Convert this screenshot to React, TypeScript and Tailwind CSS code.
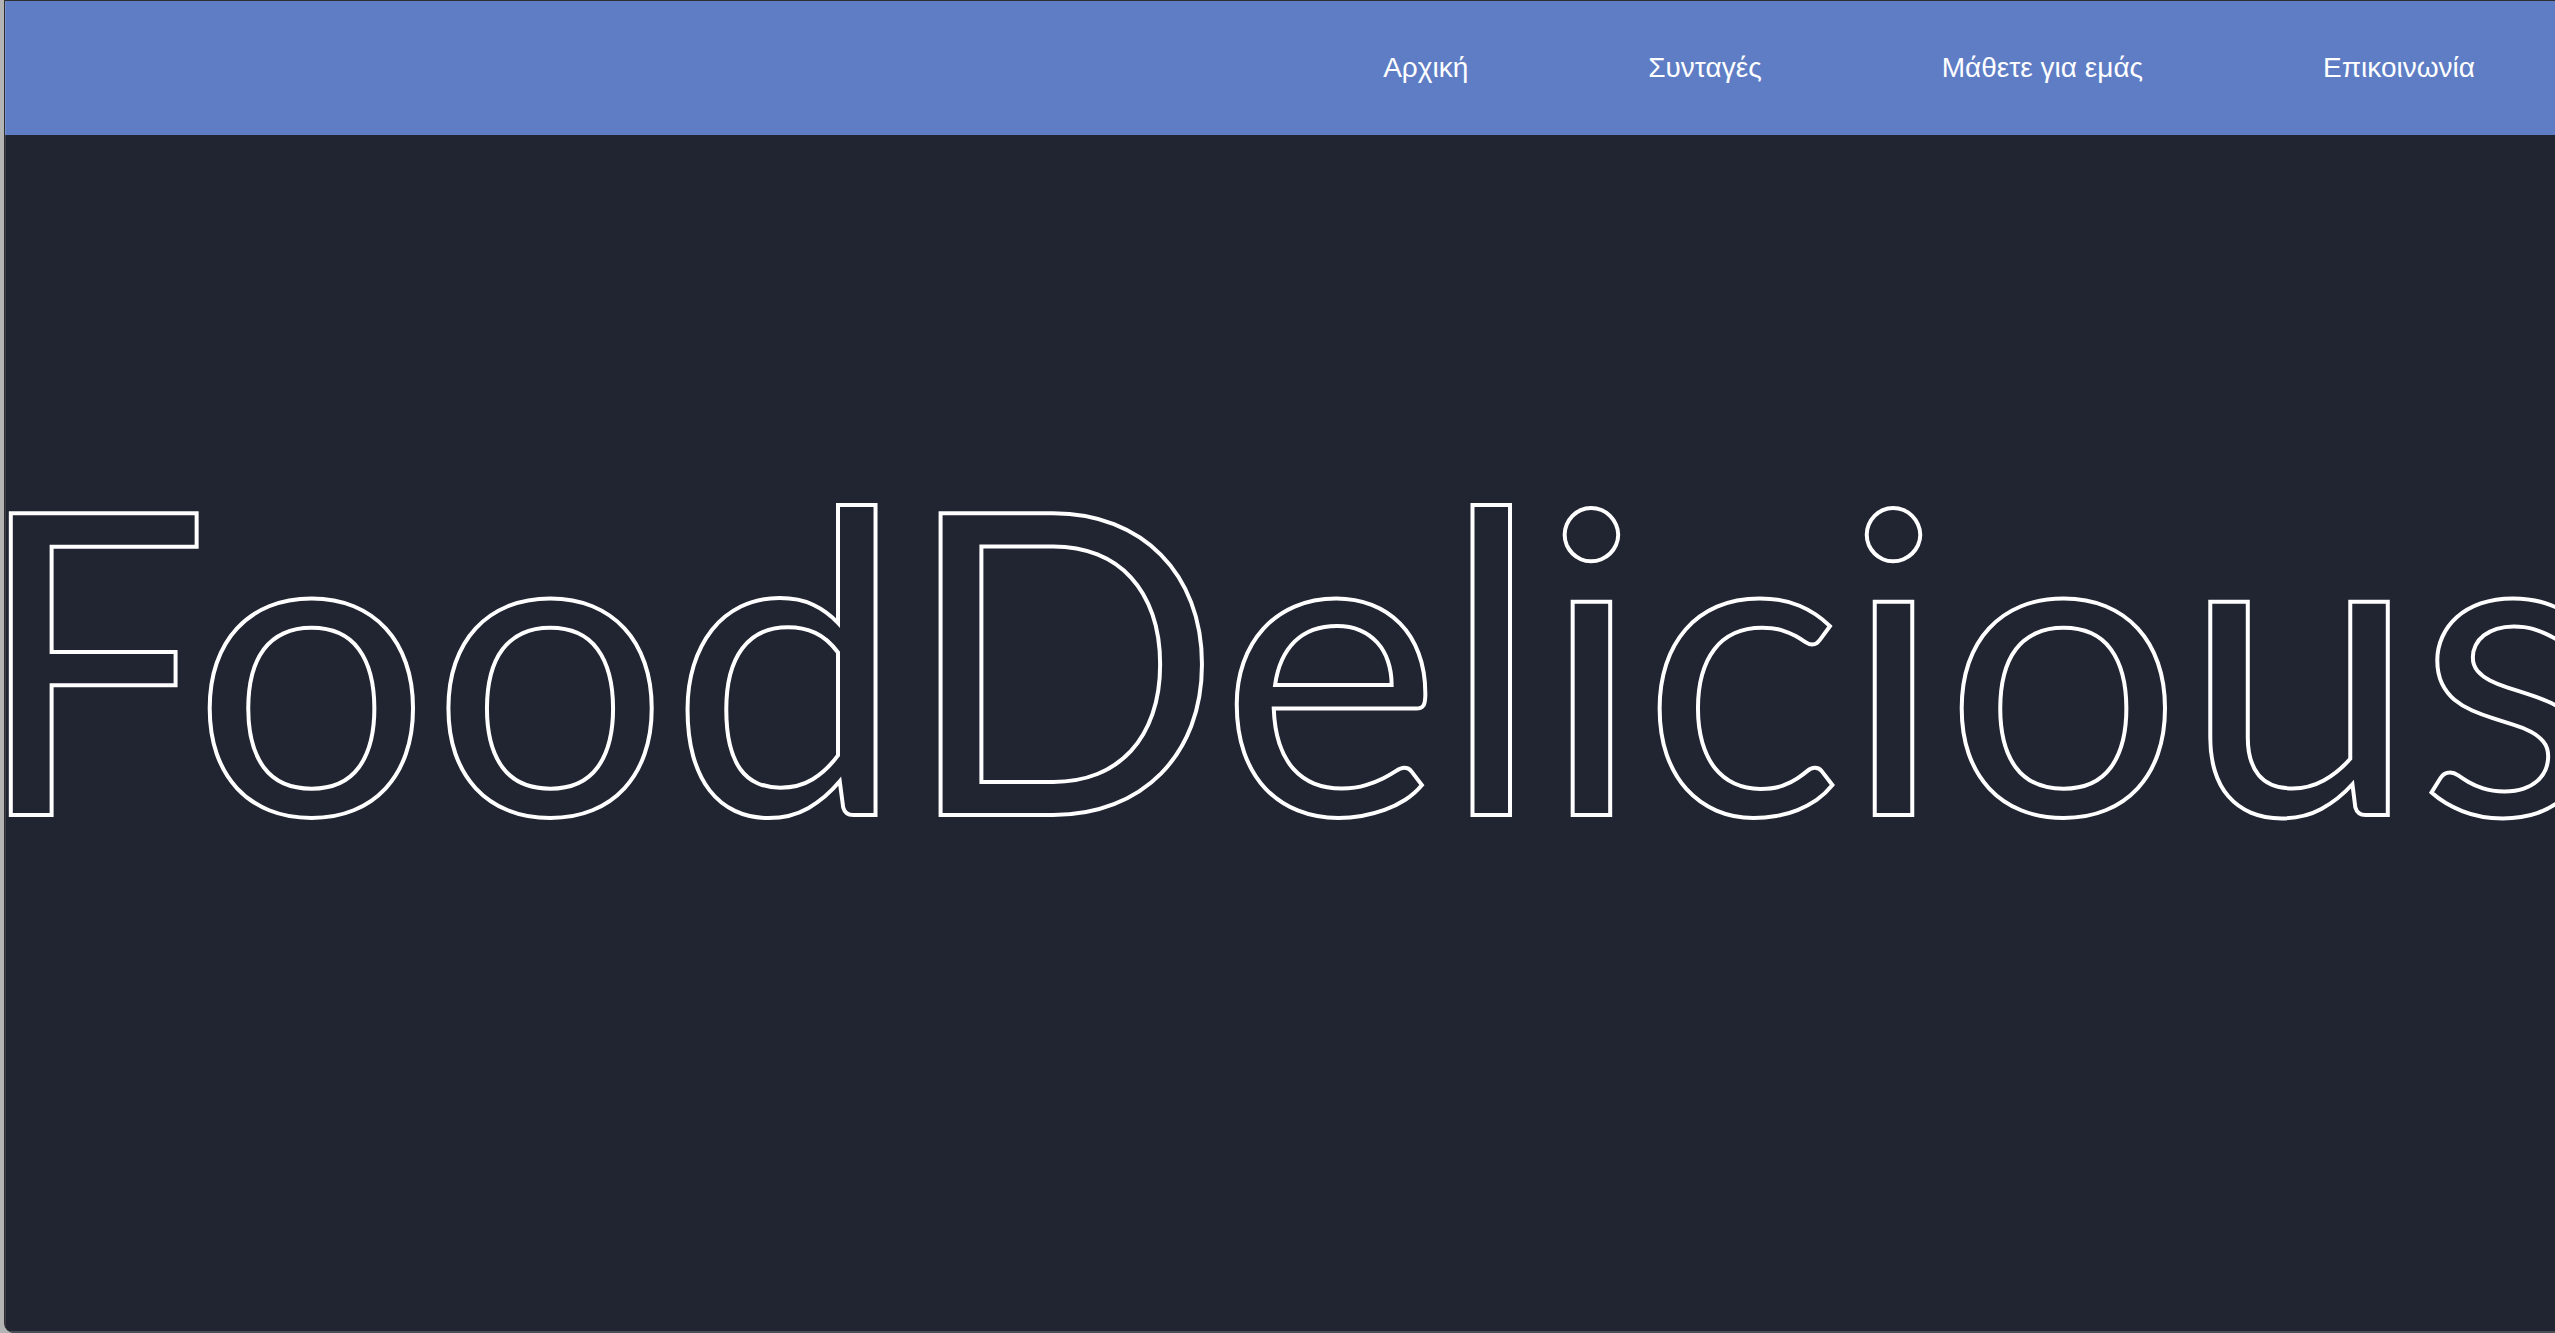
import React from "react";

export default function App() {
  const items = ["Αρχική", "Συνταγές", "Μάθετε για εμάς", "Επικοινωνία"];
  return (
    <div className="w-[2555px] h-[1333px] bg-[#b4b4b4] pl-[4px] overflow-hidden">
      <div className="w-full h-full flex flex-col border-l border-t border-[#2e2e2e] rounded-bl-[10px] overflow-hidden bg-[#212431]">
        <nav className="h-[134px] shrink-0 bg-[#5e7dc5] flex items-center justify-end pr-[80px] shadow-[inset_1px_0_0_rgba(255,255,255,0.15)]">
          <ul className="flex items-center gap-[180px] font-['Liberation_Sans',Arial,sans-serif] text-[28px] text-white">
            {items.map((t) => (
              <li key={t}>
                <a href="#" className="text-white">{t}</a>
              </li>
            ))}
          </ul>
        </nav>
        <main className="flex-1 flex justify-center pt-[307px] pl-[12px] overflow-visible shadow-[inset_1px_0_0_rgba(255,255,255,0.12)]">
          <h1 className="whitespace-nowrap leading-none font-['Lato',sans-serif] font-normal text-[421px] text-transparent [-webkit-text-stroke:4px_white]">
            FoodDelicious
          </h1>
        </main>
        <div className="h-[2px] shrink-0 bg-[#4a4e57]" />
      </div>
    </div>
  );
}
